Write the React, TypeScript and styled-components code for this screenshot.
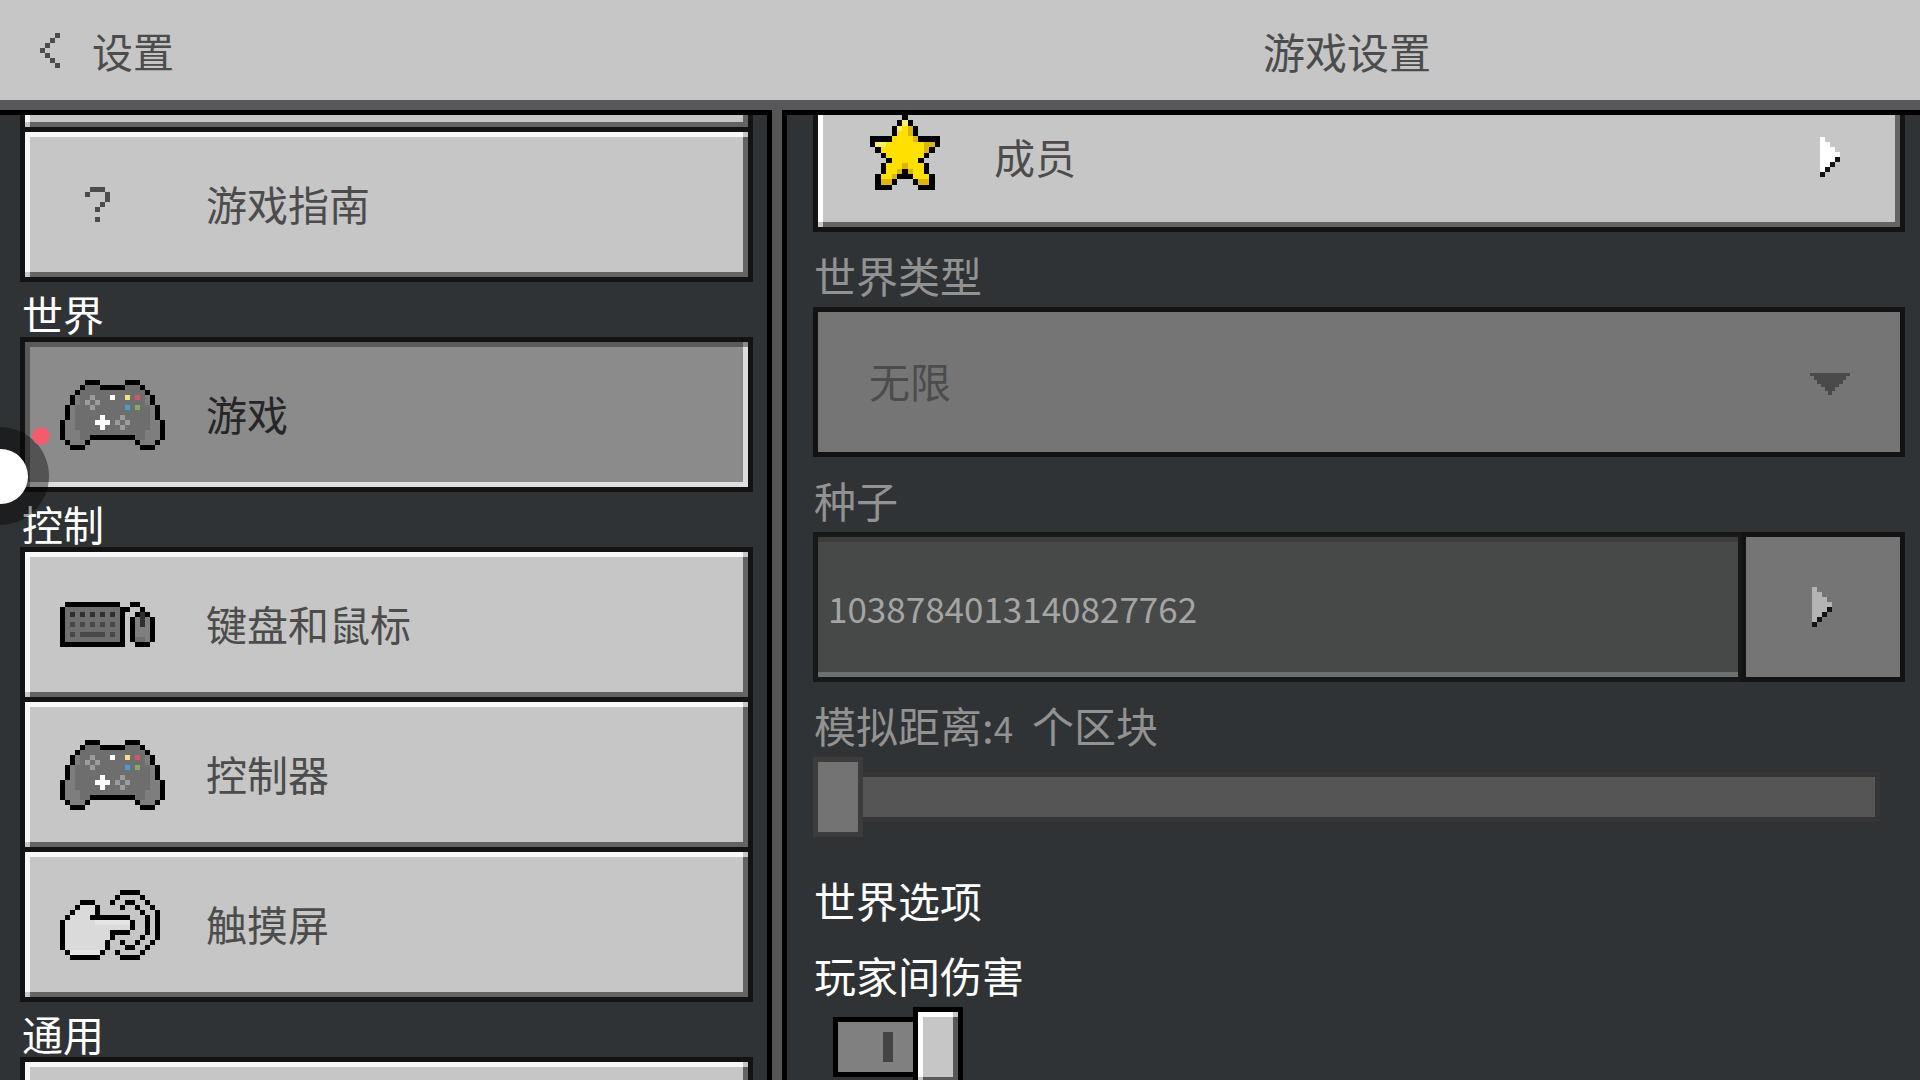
import React from 'react';
import styled, { createGlobalStyle, css } from 'styled-components';

const GlobalStyle = createGlobalStyle`
  *, *::before, *::after { box-sizing: border-box; }
  html, body { margin: 0; padding: 0; background: #303335; }
  body, button, input, select {
    font-family: "Noto Sans CJK SC", "Noto Sans", sans-serif;
    font-weight: 400;
  }
`;

/* ---------- pixel sprites ---------- */

const palette: Record<string, string> = {
  k: '#000000', g: '#6e6e6e', h: '#7e7e7e', l: '#9c9c9c', w: '#ffffff',
  y: '#f4e080', r: '#d4566a', b: '#4a9cd0', n: '#84ac64', d: '#303030',
  m: '#484848', t: '#4c4c4c', f: '#dadada', e: '#e4e4e4', Y: '#ffe000',
  L: '#fff06a', D: '#dcb414', A: '#b4b4b4', K: '#141414',
};

const controllerRows = [
  '.....kkk.....kkk.....',
  '....kgggkkkkkgggk....',
  '...kgggggggggggggk...',
  '..khgglgggwggygrghk..',
  '..khglglggggggggghk..',
  '.khggglggggggbgngghk.',
  '.khggggggggggggggghk.',
  '.khgggggwggglggggghk.',
  'khhggggwwwglglgggghhk',
  'khhgggggwggglggggghhk',
  'khhhggggggggggggghhhk',
  'khhhggkkkkkkkkkgghhhk',
  '.khhhk.........khhhk.',
  '..kkk...........kkk..',
];

const keyboardRows = [
  '.kkkkkkkkkkk..kk...',
  'kgggggggggggkk..k..',
  'kgdgdgdgdgdgk..kdk.',
  'kgggggggggggk.khdhk',
  'kgmgmgmgmgmgk.khdhk',
  'kgggggggggggk.khhhk',
  'kgmgmmmmmgmgk.khhhk',
  'kgggggggggggk.kgghk',
  'kkkkkkkkkkkkk..kkk.',
];

const touchRows = [
  '............kkkk....',
  '...........k....k...',
  '....kkk...k..kk..k..',
  '...kfffk....k..k..k.',
  '..kffffk........k..k',
  '.kffffkkkkkkkk...k.k',
  'kffffffeeeeeeek..k.k',
  'kfffffffffffffk..k.k',
  'kfffffffffkkkk...k.k',
  'kfffffffffk.....k..k',
  'kffffffffk..k..k..k.',
  'kffffffffk...kk..k..',
  '.keeeeeek..k....k...',
  '..kkkkkk....kkkk....',
];

const starRows = [
  '......k......',
  '.....kLk.....',
  '....kLYDk....',
  '....kYYDk....',
  'kkkkYYYYDkkkk',
  'kLLYYYYYYYDDk',
  '.kYYYYYYYYDk.',
  '..kYYYYYYYk..',
  '...kYYYYYk...',
  '..kYYYDYYYk..',
  '..kYYDkDYYk..',
  '.kYYDkkkYYYk.',
  '.kDDk...kDDk.',
  '.kkk.....kkk.',
];

const helpRows = ['.ttt.', 't...t', '....t', '...t.', '..t..', '.....', '..t..'];
const backRows = ['...t', '..t.', '.t..', 't...', '.t..', '..t.', '...t'];
const arrowRows = ['w...', 'ww..', 'www.', 'wwww', 'wwwK', 'wwK.', 'wK..', 'K...'];
const dimArrowRows = arrowRows.map((row) => row.replace(/w/g, 'A'));

const SpriteSvg = styled.svg`
  display: block;
  flex: none;
`;

function Sprite({ rows, width, height }: { rows: string[]; width?: number; height?: number }) {
  const cols = rows[0].length;
  return (
    <SpriteSvg
      width={width ?? cols * 5}
      height={height ?? rows.length * 5}
      viewBox={`0 0 ${cols} ${rows.length}`}
      preserveAspectRatio="none"
      shapeRendering="crispEdges"
      aria-hidden="true"
    >
      {rows.flatMap((row, y) =>
        [...row].map((c, x) =>
          palette[c] ? <rect key={`${x}-${y}`} x={x} y={y} width={1} height={1} fill={palette[c]} /> : null,
        ),
      )}
    </SpriteSvg>
  );
}

/* ---------- frame ---------- */

const Screen = styled.div`
  display: flex;
  flex-direction: column;
  height: 100vh;
  overflow: hidden;
  background: #303335;
  font-size: 42px;
  line-height: 45px;
  color: #ffffff;
`;

const columns = css`
  display: grid;
  grid-template-columns: minmax(0, 772px) 10px minmax(0, 1fr);
`;

const Header = styled.header`
  ${columns}
  flex: none;
  height: 110px;
  background: #c6c6c6;
  border-bottom: 10px solid #58585b;
  color: #4c4c4c;
`;

const BackButton = styled.button`
  display: flex;
  align-items: center;
  gap: 32px;
  padding: 0 40px;
  border: 0;
  background: none;
  color: inherit;
  font-size: 41px;
  line-height: 45px;
  text-align: left;
`;

const Title = styled.h1`
  grid-column: 3;
  align-self: center;
  margin: 0;
  padding-right: 8px;
  font-size: 42px;
  font-weight: 400;
  text-align: center;
`;

const Body = styled.div`
  ${columns}
  flex: 1;
  min-height: 0;
  background: #555555;
`;

const Panel = styled.div`
  min-width: 0;
  overflow: hidden;
  background: #303335;
  border-top: 5px solid #000000;
`;

const Sidebar = styled(Panel).attrs({ as: 'nav' })`
  border-right: 5px solid #000000;
  padding: 0 14px 0 20px;
`;

const Content = styled(Panel).attrs({ as: 'main' })`
  grid-column: 3;
  border-left: 5px solid #000000;
  padding: 0 15px 0 26px;
`;

/* ---------- bevelled buttons ---------- */

const bevel = (face: string, light: string, dark: string) => css`
  border: 5px solid #131313;
  background:
    linear-gradient(${face}, ${face}) right top / 5px 5px no-repeat,
    linear-gradient(${face}, ${face}) left bottom / 5px 5px no-repeat,
    linear-gradient(${light}, ${light}) top / 100% 5px no-repeat,
    linear-gradient(${dark}, ${dark}) bottom / 100% 5px no-repeat,
    linear-gradient(${light}, ${light}) left / 5px 100% no-repeat,
    linear-gradient(${dark}, ${dark}) right / 5px 100% no-repeat,
    ${face};
  background-origin: padding-box;
`;

/* The list is scrolled, so its first button is mostly hidden under the header. */
const NavList = styled.div`
  display: flex;
  flex-direction: column;
  margin-top: -138px;
`;

const NavButton = styled.button<{ $selected?: boolean }>`
  display: flex;
  align-items: center;
  width: 100%;
  height: 155px;
  padding: 0 35px;
  font-size: 41px;
  line-height: 45px;
  text-align: left;
  color: ${(p) => (p.$selected ? '#262626' : '#4c4c4c')};
  ${(p) => (p.$selected ? bevel('#8b8b8b', '#5a5a5a', '#dedede') : bevel('#c6c6c6', '#f8f8f8', '#636363'))}

  & + & { margin-top: -5px; }
`;

const IconSlot = styled.span<{ $inset?: boolean }>`
  display: flex;
  flex: none;
  width: 146px;
  padding-left: ${(p) => (p.$inset ? '25px' : '0')};
`;

const ButtonText = styled.span`
  padding-bottom: 2px;
`;

const NavHeading = styled.h2`
  height: 55px;
  margin: 0;
  padding: 9px 0 0 2px;
  font-size: 41px;
  font-weight: 400;
  line-height: 45px;
`;

/* ---------- settings ---------- */

const Form = styled.form`
  display: flex;
  flex-direction: column;
  margin-top: -33px;
`;

const MemberButton = styled.button`
  display: flex;
  align-items: center;
  justify-content: space-between;
  width: 100%;
  height: 150px;
  padding: 0 60px 0 52px;
  font-size: 41px;
  line-height: 45px;
  color: #4c4c4c;
  ${bevel('#c6c6c6', '#ffffff', '#636363')}
`;

const MemberLabel = styled.span`
  display: flex;
  align-items: center;
  gap: 54px;
`;

const StarBox = styled.span`
  padding-bottom: 10px;
`;

const FieldLabel = styled.label<{ $muted?: boolean }>`
  height: 75px;
  padding: 20px 0 0 1px;
  line-height: 45px;
  white-space: pre;
  color: ${(p) => (p.$muted ? '#929292' : '#ffffff')};
`;

const Digits = styled.span`
  font-size: 35px;
`;

const SectionHeading = styled.h2`
  height: 75px;
  margin: 20px 0 0;
  padding: 20px 0 0 1px;
  font-size: 42px;
  font-weight: 400;
  line-height: 45px;
`;

const SelectBox = styled.div`
  display: grid;
  align-items: center;

  & > * { grid-area: 1 / 1; }
  & > svg { justify-self: end; margin: 4px 55px 0 0; pointer-events: none; }
`;

const WorldType = styled.select`
  appearance: none;
  width: 100%;
  height: 150px;
  padding: 0 51px 4px;
  border: 5px solid #131313;
  border-radius: 0;
  background: #757575;
  color: #4c4c4c;
  font-size: 41px;
  opacity: 1;
`;

const SeedRow = styled.div`
  display: flex;
  height: 150px;
`;

const SeedInput = styled.input`
  flex: 1;
  min-width: 0;
  padding: 0 10px;
  border: 5px solid #171918;
  border-radius: 0;
  background:
    linear-gradient(#3c3c3c, #3c3c3c) top / 100% 5px no-repeat,
    linear-gradient(#6c7070, #6c7070) bottom / 100% 5px no-repeat,
    #464948;
  background-origin: padding-box;
  color: #a4a4a4;
  font-size: 35px;
`;

const SeedButton = styled.button`
  display: flex;
  align-items: center;
  flex: none;
  width: 164px;
  margin-left: -2px;
  padding: 0 66px;
  border: 5px solid #131313;
  background: #757575;
`;

const Slider = styled.input`
  appearance: none;
  height: 80px;
  margin: 0 25px 0 0;
  background: none;

  &::-webkit-slider-runnable-track {
    height: 50px;
    border: 5px solid #353535;
    background: #555555;
  }
  &::-webkit-slider-thumb {
    appearance: none;
    width: 50px;
    height: 80px;
    margin: -20px 0 0 -5px;
    border: 5px solid #3c3c3c;
    background: #727272;
  }
`;

const Toggle = styled.input`
  appearance: none;
  display: flex;
  align-items: center;
  flex: none;
  width: 130px;
  height: 80px;
  margin: 0 0 0 20px;

  &::before {
    content: "";
    width: 80px;
    height: 60px;
    border: 5px solid #000000;
    border-right: 0;
    background: linear-gradient(#444444, #444444) 45px 10px / 10px 30px no-repeat, #808080;
  }
  &::after {
    content: "";
    width: 50px;
    height: 80px;
    ${bevel('#c6c6c6', '#ffffff', '#585858')}
    border-color: #000000;
  }
`;

/* ---------- floating assist ball ---------- */

const AssistBall = styled.div`
  position: fixed;
  left: -49px;
  top: 427px;
  display: grid;
  place-items: center;
  width: 98px;
  height: 98px;
  border-radius: 50%;
  background: rgba(0, 0, 0, 0.4);

  &::before {
    content: "";
    width: 55px;
    height: 55px;
    border-radius: 50%;
    background: #ffffff;
  }
  &::after {
    content: "";
    position: absolute;
    left: 81px;
    top: 0;
    width: 18px;
    height: 18px;
    border-radius: 50%;
    background: #f25c6c;
  }
`;

function DownArrow() {
  const steps = [[0, 3, 0], [3, 4, 4], [7, 4, 7], [11, 3, 11], [14, 4, 15], [18, 4, 18]];
  return (
    <SpriteSvg width={40} height={22} viewBox="0 0 40 22" shapeRendering="crispEdges" aria-hidden="true">
      {steps.map(([y, h, inset]) => (
        <rect key={y} x={inset} y={y} width={40 - inset * 2} height={h} fill="#4a4a4a" />
      ))}
    </SpriteSvg>
  );
}

function NavItem({ rows, label, selected, inset }: {
  rows?: string[]; label?: string; selected?: boolean; inset?: boolean;
}) {
  return (
    <NavButton type="button" $selected={selected} aria-current={selected ? 'page' : undefined}>
      <IconSlot $inset={inset}>{rows && <Sprite rows={rows} />}</IconSlot>
      {label && <ButtonText>{label}</ButtonText>}
    </NavButton>
  );
}

export default function App() {
  return (
    <>
      <GlobalStyle />
      <Screen>
        <Header>
          <BackButton type="button">
            <Sprite rows={backRows} />
            <span>设置</span>
          </BackButton>
          <Title>游戏设置</Title>
        </Header>
        <Body>
          <Sidebar>
            <NavList>
              <NavItem />
              <NavItem rows={helpRows} label="游戏指南" inset />
              <NavHeading>世界</NavHeading>
              <NavItem rows={controllerRows} label="游戏" selected />
              <NavHeading>控制</NavHeading>
              <NavItem rows={keyboardRows} label="键盘和鼠标" />
              <NavItem rows={controllerRows} label="控制器" />
              <NavItem rows={touchRows} label="触摸屏" />
              <NavHeading>通用</NavHeading>
              <NavItem />
            </NavList>
          </Sidebar>
          <Content>
            <Form>
              <MemberButton type="button">
                <MemberLabel>
                  <StarBox><Sprite rows={starRows} width={70} height={75} /></StarBox>
                  <ButtonText>成员</ButtonText>
                </MemberLabel>
                <Sprite rows={arrowRows} />
              </MemberButton>
              <FieldLabel htmlFor="world-type" $muted>世界类型</FieldLabel>
              <SelectBox>
                <WorldType id="world-type" disabled>
                  <option>无限</option>
                </WorldType>
                <DownArrow />
              </SelectBox>
              <FieldLabel htmlFor="seed" $muted>种子</FieldLabel>
              <SeedRow>
                <SeedInput id="seed" type="text" disabled defaultValue="1038784013140827762" />
                <SeedButton type="button" disabled aria-label="种子">
                  <Sprite rows={dimArrowRows} />
                </SeedButton>
              </SeedRow>
              <FieldLabel htmlFor="distance" $muted>模拟距离:<Digits>4</Digits>{'  '}个区块</FieldLabel>
              <Slider id="distance" type="range" min={4} max={12} defaultValue={4} disabled />
              <SectionHeading>世界选项</SectionHeading>
              <FieldLabel htmlFor="pvp">玩家间伤害</FieldLabel>
              <Toggle id="pvp" type="checkbox" role="switch" defaultChecked={false} />
            </Form>
          </Content>
        </Body>
        <AssistBall />
      </Screen>
    </>
  );
}
